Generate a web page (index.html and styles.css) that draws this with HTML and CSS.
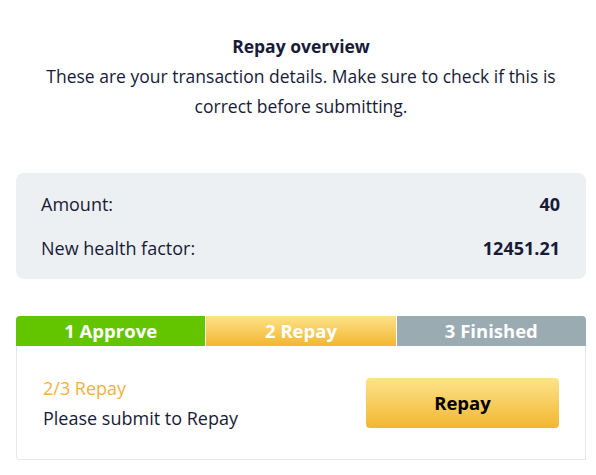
FILE: index.html
```html
<!DOCTYPE html>
<html>
<head>
<meta charset="utf-8">
<link rel="stylesheet" href="styles.css">
</head>
<body>
<div class="page">
  <div class="intro">
    <div class="title">Repay overview</div>
    <div class="desc">These are your transaction details. Make sure to check if this is correct before submitting.</div>
  </div>
  <div class="details">
    <div class="row"><span>Amount:</span><span class="val">40</span></div>
    <div class="row"><span>New health factor:</span><span class="val">12451.21</span></div>
  </div>
  <div class="steps">
    <div class="step done">1 Approve</div>
    <div class="step active">2 Repay</div>
    <div class="step todo">3 Finished</div>
  </div>
  <div class="card">
    <div class="info">
      <div class="sub">2/3 Repay</div>
      <div class="msg">Please submit to Repay</div>
    </div>
    <button class="btn">Repay</button>
  </div>
</div>
</body>
</html>
```
FILE: styles.css
```css
* { box-sizing: border-box; }
body {
  margin: 0;
  background: #fff;
  font-family: "Open Sans", "Liberation Sans", sans-serif;
  color: #181b38;
}
.page {
  width: 586px;
  padding-left: 16px;
}
.intro {
  padding-top: 33px;
  text-align: center;
}
.title {
  font-weight: 700;
  font-size: 17.5px;
  line-height: 26px;
  margin-bottom: 2px;
}
.desc {
  font-size: 17.5px;
  line-height: 30px;
  padding: 0 8px;
}
.details {
  margin-top: 52px;
  background: #ecf0f3;
  border-radius: 8px;
  padding: 18px 26px 18px 25px;
  display: flex;
  flex-direction: column;
  gap: 18px;
}
.row {
  display: flex;
  justify-content: space-between;
  font-size: 18px;
  line-height: 26px;
}
.val { font-weight: 700; }
.steps {
  margin-top: 37px;
  display: flex;
  gap: 1px;
  height: 30px;
  border-radius: 4px 4px 0 0;
  overflow: hidden;
}
.step {
  flex: 1;
  color: #fff;
  font-weight: 700;
  font-size: 18.5px;
  line-height: 30px;
  text-align: center;
}
.done { background: #63c500; }
.active { background: linear-gradient(#fde287, #f3b631); }
.todo { background: #9aabb2; }
.card {
  height: 114px;
  border: 1px solid #e7e8ea;
  border-top: none;
  border-radius: 0 0 0 4px;
  padding: 0 26px;
  display: flex;
  align-items: center;
  justify-content: space-between;
}
.info { display: flex; flex-direction: column; gap: 4px; }
.sub { color: #f4b13f; font-size: 18px; line-height: 26px; }
.msg { font-size: 18px; line-height: 26px; }
.btn {
  width: 193px;
  height: 50px;
  border: none;
  border-radius: 4px;
  background: linear-gradient(#fde38b, #f2b730);
  font-family: inherit;
  font-weight: 700;
  font-size: 18.5px;
  color: #000;
}
```
